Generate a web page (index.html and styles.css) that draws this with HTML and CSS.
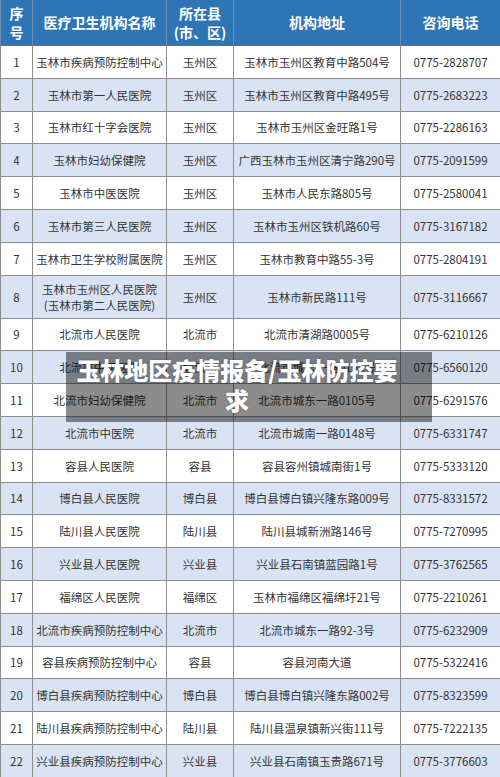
FILE: index.html
```html
<!DOCTYPE html>
<html lang="zh-CN">
<head>
<meta charset="utf-8">
<title>玉林地区疫情报备</title>
<link rel="stylesheet" href="styles.css">
</head>
<body>
<div class="wrap">
<table class="tbl">
<colgroup>
<col class="c1"><col class="c2"><col class="c3"><col class="c4"><col class="c5">
</colgroup>
<thead>
<tr><th>序号</th><th>医疗卫生机构名称</th><th>所在县<br>(市、区)</th><th>机构地址</th><th>咨询电话</th></tr>
</thead>
<tbody>
<tr><td>1</td><td>玉林市疾病预防控制中心</td><td>玉州区</td><td>玉林市玉州区教育中路504号</td><td>0775-2828707</td></tr>
<tr><td>2</td><td>玉林市第一人民医院</td><td>玉州区</td><td>玉林市玉州区教育中路495号</td><td>0775-2683223</td></tr>
<tr><td>3</td><td>玉林市红十字会医院</td><td>玉州区</td><td>玉林市玉州区金旺路1号</td><td>0775-2286163</td></tr>
<tr><td>4</td><td>玉林市妇幼保健院</td><td>玉州区</td><td>广西玉林市玉州区清宁路290号</td><td>0775-2091599</td></tr>
<tr><td>5</td><td>玉林市中医医院</td><td>玉州区</td><td>玉林市人民东路805号</td><td>0775-2580041</td></tr>
<tr><td>6</td><td>玉林市第三人民医院</td><td>玉州区</td><td>玉林市玉州区铁机路60号</td><td>0775-3167182</td></tr>
<tr><td>7</td><td>玉林市卫生学校附属医院</td><td>玉州区</td><td>玉林市教育中路55-3号</td><td>0775-2804191</td></tr>
<tr class="tall"><td>8</td><td>玉林市玉州区人民医院<br>(玉林市第二人民医院)</td><td>玉州区</td><td>玉林市新民路111号</td><td>0775-3116667</td></tr>
<tr><td>9</td><td>北流市人民医院</td><td>北流市</td><td>北流市清湖路0005号</td><td>0775-6210126</td></tr>
<tr><td>10</td><td>北流市中医医院</td><td>北流市</td><td>北流市城东一路0105号</td><td>0775-6560120</td></tr>
<tr><td>11</td><td>北流市妇幼保健院</td><td>北流市</td><td>北流市城东一路0105号</td><td>0775-6291576</td></tr>
<tr><td>12</td><td>北流市中医院</td><td>北流市</td><td>北流市城南一路0148号</td><td>0775-6331747</td></tr>
<tr><td>13</td><td>容县人民医院</td><td>容县</td><td>容县容州镇城南街1号</td><td>0775-5333120</td></tr>
<tr><td>14</td><td>博白县人民医院</td><td>博白县</td><td>博白县博白镇兴隆东路009号</td><td>0775-8331572</td></tr>
<tr><td>15</td><td>陆川县人民医院</td><td>陆川县</td><td>陆川县城新洲路146号</td><td>0775-7270995</td></tr>
<tr><td>16</td><td>兴业县人民医院</td><td>兴业县</td><td>兴业县石南镇蓝园路1号</td><td>0775-3762565</td></tr>
<tr><td>17</td><td>福绵区人民医院</td><td>福绵区</td><td>玉林市福绵区福绵圩21号</td><td>0775-2210261</td></tr>
<tr><td>18</td><td>北流市疾病预防控制中心</td><td>北流市</td><td>北流市城东一路92-3号</td><td>0775-6232909</td></tr>
<tr><td>19</td><td>容县疾病预防控制中心</td><td>容县</td><td>容县河南大道</td><td>0775-5322416</td></tr>
<tr><td>20</td><td>博白县疾病预防控制中心</td><td>博白县</td><td>博白县博白镇兴隆东路002号</td><td>0775-8323599</td></tr>
<tr><td>21</td><td>陆川县疾病预防控制中心</td><td>陆川县</td><td>陆川县温泉镇新兴街111号</td><td>0775-7222135</td></tr>
<tr><td>22</td><td>兴业县疾病预防控制中心</td><td>兴业县</td><td>兴业县石南镇玉贵路671号</td><td>0775-3776603</td></tr>
</tbody>
</table>
<div class="caption">玉林地区疫情报备/玉林防控要求</div>
</div>
</body>
</html>
```
FILE: styles.css
```css
html, body {
  margin: 0;
  padding: 0;
  background: #ffffff;
}
.wrap {
  position: relative;
  width: 500px;
  height: 777px;
  overflow: hidden;
}
.tbl {
  width: 500px;
  border-collapse: collapse;
  table-layout: fixed;
  font-family: "Noto Sans CJK SC", "Noto Sans", sans-serif;
}
.c1 { width: 32px; }
.c2 { width: 134px; }
.c3 { width: 67px; }
.c4 { width: 167px; }
.c5 { width: 100px; }
.tbl th {
  background: #2e75b6;
  color: #ffffff;
  font-size: 14px;
  font-weight: 700;
  line-height: 19px;
  height: 45px;
  padding: 0 4px;
  text-align: center;
  border: 1px solid #6f8fb3;
  border-top: none;
  border-bottom: 1px solid #6a6a6a;
}
.tbl td {
  font-size: 11.5px;
  color: #333333;
  text-align: center;
  line-height: 16px;
  padding: 0;
  height: 31.8px;
  border: 1px solid #8e8e8e;
}
.tbl tbody tr:nth-child(even) td {
  background: #dae3f3;
}
.tbl tr.tall td {
  height: 42px;
}
.caption {
  position: absolute;
  left: 66px;
  top: 352px;
  width: 326px;
  padding: 3px 32px 7px 8px;
  background: rgba(0, 0, 0, 0.45);
  color: #ffffff;
  font-family: "Noto Sans CJK SC", sans-serif;
  font-weight: 900;
  font-size: 24px;
  line-height: 30px;
  text-align: center;
  text-shadow: 0 0 2px rgba(0,0,0,0.3);
}
```
